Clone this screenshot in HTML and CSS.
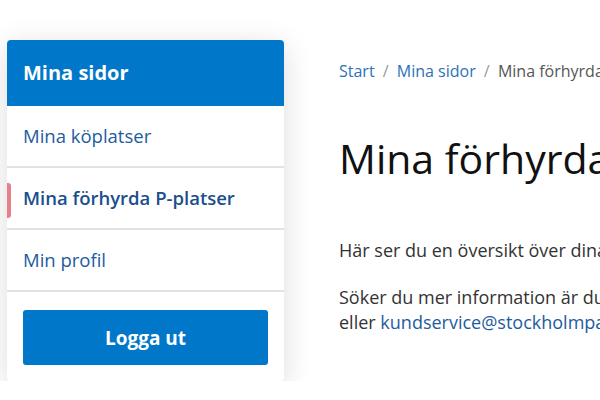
FILE: index.html
```html
<!DOCTYPE html>
<html lang="sv">
<head>
    <meta charset="UTF-8">
    <meta name="viewport" content="width=device-width, initial-scale=1.0">
    <title>Mina förhyrda P-platser</title>
    <link rel="stylesheet" href="styles.css">
</head>
<body>
    <div class="page">
        <aside class="sidebar">
            <div class="sidebar-header">Mina sidor</div>
            <nav class="sidebar-nav">
                <a class="nav-item" href="#">Mina köplatser</a>
                <a class="nav-item active" href="#">Mina förhyrda P-platser</a>
                <a class="nav-item" href="#">Min profil</a>
            </nav>
            <div class="sidebar-footer">
                <button class="logout">Logga ut</button>
            </div>
        </aside>

        <main class="content">
            <div class="breadcrumb">
                <a href="#">Start</a>
                <span class="sep">/</span>
                <a href="#">Mina sidor</a>
                <span class="sep">/</span>
                <span class="current">Mina förhyrda P-platser</span>
            </div>
            <h1>Mina förhyrda P-platser</h1>
            <p>Här ser du en översikt över dina förhyrda parkeringsplatser.</p>
            <p>Söker du mer information är du välkommen att kontakta kundservice på telefon 08-508 278 00 eller <a href="#">kundservice@stockholmparkering.se</a></p>
        </main>
    </div>
</body>
</html>
```

FILE: styles.css
```css
* {
    margin: 0;
    padding: 0;
    box-sizing: border-box;
}

body {
    font-family: 'Open Sans', 'Noto Sans', sans-serif;
    color: #333;
    background: #fff;
    overflow: hidden;
}

.page {
    display: flex;
    align-items: flex-start;
    gap: 55px;
    padding: 40px 0 0 7px;
    width: 1200px;
}

.sidebar {
    flex: 0 0 277px;
    background: #fff;
    border-radius: 4px;
    box-shadow: 0 6px 30px rgba(0, 0, 0, 0.14);
}

.sidebar-header {
    background: #0077c8;
    color: #fff;
    font-size: 20px;
    font-weight: 700;
    height: 66px;
    line-height: 66px;
    padding: 0 16px;
    border-radius: 4px 4px 0 0;
}

.sidebar-nav {
    display: flex;
    flex-direction: column;
}

.nav-item {
    position: relative;
    display: block;
    height: 62px;
    line-height: 60px;
    padding: 0 16px;
    font-size: 18.5px;
    color: #1d5c9e;
    text-decoration: none;
    border-bottom: 2px solid #e2e2e2;
}

.nav-item.active {
    font-weight: 600;
    color: #1a4f8c;
}

.nav-item.active::before {
    content: "";
    position: absolute;
    left: 0;
    top: 15px;
    width: 4px;
    height: 35px;
    background: #e6808a;
    border-radius: 0 3px 3px 0;
}

.sidebar-footer {
    padding: 18px 16px 16px;
}

.logout {
    display: block;
    width: 100%;
    height: 55px;
    border: none;
    border-radius: 3px;
    background: #0077c8;
    color: #fff;
    font-family: inherit;
    font-size: 19px;
    font-weight: 700;
}

.content {
    padding-top: 20px;
}

.breadcrumb {
    font-size: 16px;
    white-space: nowrap;
}

.breadcrumb a {
    color: #2b72b9;
    text-decoration: none;
}

.breadcrumb .sep {
    color: #999;
    margin: 0 4px;
}

.breadcrumb .current {
    color: #555;
}

.content h1 {
    font-size: 41px;
    font-weight: 400;
    color: #111;
    margin: 48px 0 52px;
    white-space: nowrap;
}

.content p {
    font-size: 18px;
    line-height: 25px;
    margin-bottom: 22px;
    width: 800px;
}

.content p a {
    color: #1d5c9e;
    text-decoration: none;
}
```
